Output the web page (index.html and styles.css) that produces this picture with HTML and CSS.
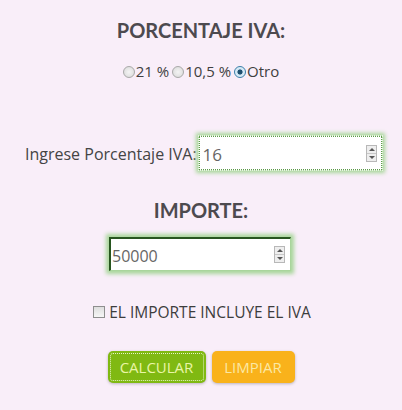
FILE: index.html
```html
<!DOCTYPE html>
<html>
<head>
<meta charset="utf-8">
<link rel="stylesheet" href="styles.css">
</head>
<body>
<div class="page">
  <h2 class="title">PORCENTAJE IVA:</h2>
  <div class="radios">
    <label class="opt"><span class="radio"></span>21 %</label>
    <label class="opt"><span class="radio"></span>10,5 %</label>
    <label class="opt"><span class="radio on"></span>Otro</label>
  </div>
  <div class="row-pct">
    <span class="lbl">Ingrese Porcentaje IVA:</span>
    <div class="field pct"><span class="val">16</span><span class="spin"><span class="up"></span><span class="dn"></span></span></div>
  </div>
  <h2 class="title t2">IMPORTE:</h2>
  <div class="row-imp">
    <div class="field imp"><span class="val">50000</span><span class="spin"><span class="up"></span><span class="dn"></span></span></div>
  </div>
  <div class="check-row">
    <span class="check"></span><span class="ctext">EL IMPORTE INCLUYE EL IVA</span>
  </div>
  <div class="buttons">
    <span class="btn green">CALCULAR</span>
    <span class="btn orange">LIMPIAR</span>
  </div>
</div>
</body>
</html>
```
FILE: styles.css
```css
html, body {
  margin: 0;
  padding: 0;
  background: #f9eef9;
}
.page {
  width: 402px;
  height: 410px;
  font-family: "Open Sans", "DejaVu Sans", sans-serif;
  color: #444;
  display: flex;
  flex-direction: column;
  align-items: center;
}
.title {
  font-family: Lato, "Liberation Sans", sans-serif;
  font-weight: 700;
  font-size: 20px;
  color: #4d4a4f;
  margin: 17px 0 0 0;
  line-height: 26px;
}
.t2 {
  margin-top: 27px;
}
.radios {
  margin-top: 18px;
  display: flex;
  font-size: 15px;
  line-height: 20px;
  color: #3f3f3f;
  margin-left: 3px;
}
.opt {
  display: flex;
  align-items: center;
  margin-right: 3px;
}
.radio {
  width: 12px;
  height: 12px;
  border-radius: 50%;
  border: 1px solid #a9a9a9;
  background: radial-gradient(circle, #f4f4f4 0, #d8d8d8 100%);
  margin-right: 1px;
  box-sizing: border-box;
  margin-top: 1px;
}
.radio.on {
  border-color: #3a7fa9;
  background: radial-gradient(circle, #1e4f6f 0, #1e4f6f 30%, #cfe6f5 42%, #e9f3fa 100%);
}
.row-pct {
  margin-top: 55px;
  display: flex;
  align-items: center;
  align-self: flex-start;
  margin-left: 25px;
}
.lbl {
  font-size: 16px;
  color: #444;
  margin-right: 2px;
  margin-top: 2px;
}
.field {
  background: #fff;
  display: flex;
  align-items: center;
  justify-content: space-between;
  box-sizing: border-box;
  color: #666;
}
.pct {
  width: 183px;
  height: 34px;
  font-size: 17px;
  border: 1px dotted #5d9a4a;
  outline: 1px dotted #e8f3e2;
  box-shadow: 0 0 4px 3px #a8d79a;
  padding-left: 3px;
  padding-right: 4px;
}
.imp {
  width: 182px;
  height: 34px;
  font-size: 16px;
  border-style: solid;
  border-width: 2px 1px 1px 2px;
  border-color: #27551f #a9d59c #a9d59c #27551f;
  box-shadow: 0 0 4px 3px #a8d79a;
  padding-left: 1px;
  padding-right: 5px;
  margin-left: -2px;
}
.val {
  padding-top: 3px;
}
.spin {
  display: flex;
  flex-direction: column;
  width: 11px;
  height: 17px;
  border: 1px solid #b8b8b8;
  background: #eee;
  box-sizing: border-box;
}
.up, .dn {
  flex: 1;
  position: relative;
}
.up {
  border-bottom: 1px solid #c8c8c8;
}
.up::after, .dn::after {
  content: "";
  position: absolute;
  left: 2px;
  border-left: 3px solid transparent;
  border-right: 3px solid transparent;
}
.up::after {
  top: 2px;
  border-bottom: 3px solid #555;
}
.dn::after {
  top: 2px;
  border-top: 3px solid #555;
}
.row-imp {
  margin-top: 14px;
}
.check-row {
  margin-top: 30px;
  display: flex;
  align-items: center;
  font-size: 15.5px;
  color: #3d3d3d;
  margin-left: 2px;
}
.check {
  width: 12px;
  height: 12px;
  border: 1px solid #8e8e8e;
  background: linear-gradient(#dedede, #f6f6f6);
  box-sizing: border-box;
  margin-right: 4px;
}
.buttons {
  margin-top: 28px;
  display: flex;
  gap: 6px;
}
.btn {
  display: flex;
  align-items: center;
  justify-content: center;
  height: 32px;
  border-radius: 5px;
  font-size: 15px;
  box-sizing: border-box;
  box-shadow: 0 1px 3px rgba(0,0,0,0.25);
}
.green {
  width: 98px;
  background: #80b912;
  color: #e9f5a6;
  outline: 1px dotted #e6f3c8;
  outline-offset: -3px;
}
.orange {
  width: 83px;
  background: #f9b21b;
  color: #fbe8a4;
}
```
